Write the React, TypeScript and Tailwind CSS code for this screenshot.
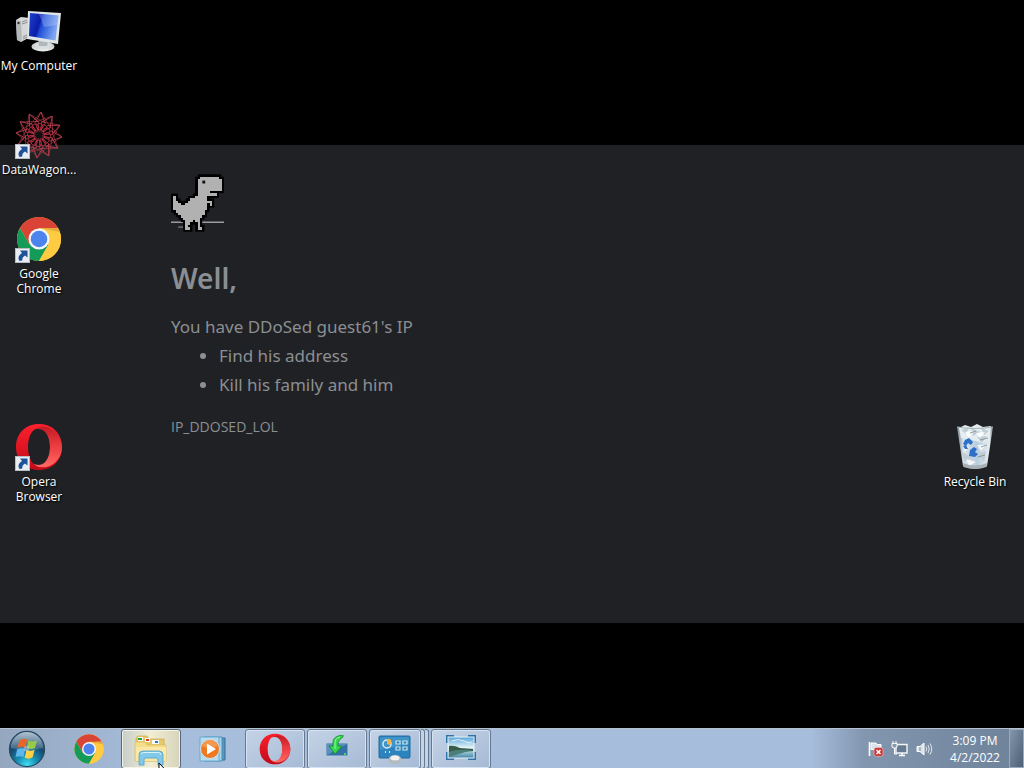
import type { ReactNode } from "react";

const DINO: [number, number, number][] = [
  [0, 11, 18], [1, 10, 19], [2, 10, 19], [3, 10, 19], [4, 10, 19], [5, 10, 19],
  [6, 10, 14], [7, 10, 17], [8, 0, 0], [8, 9, 13], [9, 0, 0], [9, 7, 13],
  [10, 0, 1], [10, 6, 15], [11, 0, 2], [11, 5, 13], [11, 15, 15], [12, 0, 13],
  [13, 0, 13], [14, 1, 12], [15, 2, 12], [16, 3, 11], [17, 4, 10], [18, 5, 7],
  [18, 9, 10], [19, 5, 6], [19, 10, 10], [20, 5, 5], [20, 10, 10], [21, 5, 6], [21, 10, 11],
];

function Dino() {
  return (
    <svg viewBox="-1 -1 22 24" className="h-[58px] w-[53px]" aria-hidden="true">
      <path d="M-1 19H21" stroke="#9a9b9d" strokeWidth=".6" />
      <path d="M2 21H4.500" stroke="#85868a" strokeWidth=".5" />
      <g fill="#000">
        {DINO.map(([y, a, b], i) => (
          <rect key={i} x={a - 0.9} y={y - 0.9} width={b - a + 2.8} height={2.8} />
        ))}
      </g>
      <g fill="#b1b1b2" shapeRendering="crispEdges">
        {DINO.map(([y, a, b], i) => (
          <rect key={i} x={a} y={y} width={b - a + 1} height={1.05} />
        ))}
      </g>
      <rect x="12" y="1.700" width="1.200" height="1.200" fill="#111" />
    </svg>
  );
}

function ComputerIcon() {
  return (
    <svg viewBox="0 0 48 48" className="size-12" aria-hidden="true">
      <defs>
        <linearGradient id="pcScreen" x1="0" y1="0" x2="1" y2=".3">
          <stop offset="0" stopColor="#1c43cc" />
          <stop offset=".42" stopColor="#0a1ca8" />
          <stop offset=".52" stopColor="#1f4fd8" />
          <stop offset="1" stopColor="#7fa6f0" />
        </linearGradient>
        <linearGradient id="pcBase" x1="0" y1="0" x2="0" y2="1">
          <stop offset="0" stopColor="#a8adb0" />
          <stop offset="1" stopColor="#f2f4f4" />
        </linearGradient>
      </defs>
      <path d="M1 13L6 10 15 11 17 29 6 35 2 33Z" fill="#d5d7d8" />
      <path d="M1 13L6 14 7 35 2 33Z" fill="#b4b8ba" />
      <path d="M7 15L12 13M7 17L13 15M8 30L16 26M8 32L16 28" stroke="#777" strokeWidth=".8" />
      <circle cx="3.500" cy="16" r="1.200" fill="#333" />
      <ellipse cx="28" cy="39.500" rx="11.500" ry="5" fill="url(#pcBase)" />
      <ellipse cx="28" cy="38" rx="9" ry="3.500" fill="#d9dddd" />
      <path d="M23 31H34L32 39H24Z" fill="#b1b8bc" />
      <path d="M13 4L46 6 43 37 12 32Z" fill="#dfe4e6" />
      <path d="M15 6L43.500 8.500 40.500 33.500 14 29Z" fill="url(#pcScreen)" />
      <path d="M24 7L43.500 8.500 42 18 29 20Z" fill="#cadcff" opacity=".3" />
    </svg>
  );
}

function WagonIcon() {
  return (
    <svg viewBox="0 0 48 48" className="size-12" fill="none" stroke="#c04050" aria-hidden="true">
      {Array.from({ length: 12 }, (_, i) => (
        <g key={i} transform={`rotate(${i * 30 + 5} 24 24)`}>
          <path d="M24 1L35 16 24 22 13 16Z" strokeWidth=".7" opacity=".75" />
          <path d="M24 1L29 12M24 1L19 12" strokeWidth=".8" />
          <circle cx="24" cy="15.500" r="3.200" strokeWidth=".9" stroke="#cd3049" opacity=".8" />
        </g>
      ))}
      <circle cx="24" cy="24" r="3.500" fill="#111" stroke="none" />
    </svg>
  );
}

function ChromeIcon({ className }: { className: string }) {
  return (
    <svg viewBox="0 0 48 48" className={className} aria-hidden="true">
      <circle cx="24" cy="24" r="22" fill="#ffcb43" />
      <path d="M24 24V13H43A22 22 0 0 0 4.950 13L14.500 29.500Z" fill="#da4437" />
      <path d="M24 24L14.470 29.500 4.950 13A22 22 0 0 0 24 46L33.530 29.500Z" fill="#159b58" />
      <path d="M24 24H34V13H43.050A22 22 0 0 1 24 46L33.530 29.500Z" fill="#ffcb43" />
      <path d="M24 13H43.050A22 22 0 0 1 44.700 17Z" fill="#a9622c" opacity=".3" />
      <circle cx="24" cy="24" r="10.500" fill="#f5f7f8" />
      <circle cx="24" cy="24" r="8.300" fill="#4c83ed" />
    </svg>
  );
}

function OperaIcon({ className, id }: { className: string; id: string }) {
  return (
    <svg viewBox="0 0 48 48" className={className} aria-hidden="true">
      <defs>
        <linearGradient id={`${id}a`} x1="0" y1="0" x2="0" y2="1">
          <stop offset="0" stopColor="#ff202d" />
          <stop offset="1" stopColor="#c00a18" />
        </linearGradient>
        <linearGradient id={`${id}b`} x1="0" y1="0" x2="0" y2="1">
          <stop offset="0" stopColor="#c51b25" />
          <stop offset=".5" stopColor="#ed3e42" />
          <stop offset="1" stopColor="#ff6a65" />
        </linearGradient>
      </defs>
      <path fillRule="evenodd" d="M24 1C10 1 1 11 1 24S10 47 24 47 47 37 47 24 38 1 24 1ZM24 5C31 5 35 14 35 24S31 43 24 43 13 34 13 24 17 5 24 5Z" fill={`url(#${id}a)`} />
      <path d="M18 7.500C28 -2 47 7 47 24S28 50 18 40.500C29 46 35 35 35 24S29 2 18 7.500Z" fill={`url(#${id}b)`} />
    </svg>
  );
}

function BinIcon() {
  return (
    <svg viewBox="0 0 48 48" className="size-12" aria-hidden="true">
      <defs>
        <linearGradient id="bin" x1="0" y1="0" x2="1" y2="0">
          <stop offset="0" stopColor="#758490" />
          <stop offset=".18" stopColor="#dbe6ee" />
          <stop offset=".55" stopColor="#b8cddd" />
          <stop offset=".9" stopColor="#e6edf0" />
          <stop offset="1" stopColor="#717b80" />
        </linearGradient>
      </defs>
      <path d="M6 4L42 4 36 43Q24 49 12 43Z" fill="url(#bin)" />
      <path d="M8 5L14 2 20 4 26 1 32 4 40 3 38 15 32 20 21 17 10 15Z" fill="#e5edf0" />
      <path d="M10 7L18 5 15 11ZM20 5L29 9 22 13ZM30 5L38 8 33 12ZM26 14L36 13 31 20ZM11 29L22 35 13 39ZM27 31L35 28 33 39Z" fill="#c1ced5" />
      <path d="M14 9L23 8 18 15ZM25 10L34 9 29 15ZM15 36L25 39 18 43ZM26 22L35 22 30 28ZM12 23L18 24 14 29Z" fill="#fff" opacity=".8" />
      <path d="M29 17L37 15M30 24L36 22M19 10L25 8M27 34L34 32" stroke="#7a868c" strokeWidth=".8" />
      <path d="M6 4Q24 7 42 4" fill="none" stroke="#aab6bc" strokeWidth="1.200" />
      <path d="M12 40Q24 45 36 40L35.500 44Q24 48 12.500 44Z" fill="#a8b0b4" />
      <path d="M14 17L18 15 22 19 20 22 17 20 15 23 12 21ZM18 33L19 27 23 24 26 26 24 29 27 31 24 34ZM12 23L15 22 17 26 14 26Z" fill="#2d70c8" />
    </svg>
  );
}

function ShortcutArrow() {
  return (
    <svg viewBox="0 0 15 15" className="absolute bottom-0 left-0 size-[15px]" aria-hidden="true">
      <rect width="15" height="15" fill="#e9edf1" />
      <rect x=".5" y=".5" width="14" height="14" fill="none" stroke="#b6bdc4" />
      <path d="M5 2.500L12.500 2.500V9.500L10 7.500Q7 9 7.200 12.500L4.500 13Q1.500 8.500 7 5Z" fill="#1d5299" />
    </svg>
  );
}

function DesktopIcon({ label, icon, shortcut = false, place = "" }: {
  label: string; icon: ReactNode; shortcut?: boolean; place?: string;
}) {
  return (
    <button type="button" className={`flex flex-col items-center gap-[3px] self-start ${place}`}>
      <span className="relative block">
        {icon}
        {shortcut && <ShortcutArrow />}
      </span>
      <span className="max-w-[78px] text-center text-xs leading-[15px] text-white [text-shadow:1px_1px_2px_#000]">
        {label}
      </span>
    </button>
  );
}

function StartOrb() {
  return (
    <svg viewBox="0 0 40 40" className="size-[38px]" aria-hidden="true">
      <defs>
        <radialGradient id="orb" cx=".5" cy=".95" r=".95">
          <stop offset="0" stopColor="#42e0f2" />
          <stop offset=".3" stopColor="#178fb4" />
          <stop offset=".62" stopColor="#164a70" />
          <stop offset="1" stopColor="#3f6585" />
        </radialGradient>
        <linearGradient id="orbShine" x1="0" y1="0" x2="0" y2="1">
          <stop offset="0" stopColor="#fff" stopOpacity=".6" />
          <stop offset="1" stopColor="#fff" stopOpacity=".12" />
        </linearGradient>
      </defs>
      <circle cx="20" cy="20" r="18.500" fill="url(#orb)" stroke="#284963" strokeWidth="1.200" />
      <path d="M3 19A17 17 0 0 1 37 19Q20 24 3 19Z" fill="url(#orbShine)" />
      <path d="M12 11Q16 8 20 10L18.500 18.500Q14.500 16.500 10 18.800Z" fill="#e96427" />
      <path d="M21.500 11Q25 13 30.500 11L28.500 19Q24 21 20 18.800Z" fill="#97ca49" />
      <path d="M9.500 20.500Q14 18 18 20.500L16.300 28.500Q12 26.500 8 28.500Z" fill="#5cb7ed" />
      <path d="M19.500 21Q24 23 28 20.800L26 28.500Q22 31.500 17.500 29Z" fill="#ffd044" />
      <circle cx="19.500" cy="19.500" r="3" fill="#fff" opacity=".3" />
    </svg>
  );
}

function FolderIcon() {
  return (
    <svg viewBox="0 0 36 34" className="h-[34px] w-9" aria-hidden="true">
      <path d="M3 6L5 4H14L16 7H31L32 29H3Z" fill="#e6c966" stroke="#c9a854" strokeWidth=".7" />
      <path d="M5 5H10V9H5ZM12 6H17V10H12ZM19 8H26V12H19Z" fill="#f8fbfa" />
      <path d="M5 6H9V8H5Z" fill="#23a42e" />
      <path d="M13 7H16V9H13Z" fill="#cd392d" />
      <path d="M22 9H25V11H22Z" fill="#3477c9" />
      <path d="M2 10H12L14 13H33V29H2Z" fill="#f5dd8b" stroke="#d9bc65" strokeWidth=".7" />
      <path d="M3 15H33V29H3Z" fill="#fae9a6" />
      <path d="M6 33V23Q6 19 10 19H26Q30 19 30 23V33H25V28Q25 26 23 26H13Q11 26 11 28V33Z" fill="#82c9e9" stroke="#4f9fc8" strokeWidth=".8" />
      <path d="M8 22Q9 20.500 11 20.500H25Q28 20.500 28 23" fill="none" stroke="#d6f2fb" />
    </svg>
  );
}

function MediaIcon() {
  return (
    <svg viewBox="0 0 30 28" className="h-7 w-[30px]" aria-hidden="true">
      <path d="M9 3H27V25H9Z" fill="#5796bd" stroke="#347099" />
      <path d="M6 2H24V26H6Z" fill="#a9d3ea" stroke="#4e8fb8" />
      <path d="M2 2H21V26H2Z" fill="#b6dcf0" stroke="#68a8cc" />
      <circle cx="12" cy="14" r="9.500" fill="#ed7923" stroke="#d9dfe3" />
      <path d="M4 11A8.500 8.500 0 0 1 20 11Q12 15 4 11Z" fill="#f9ad66" opacity=".6" />
      <path d="M9 8.500L18 14 9 19.500Z" fill="#fff" />
    </svg>
  );
}

function DownloadIcon() {
  return (
    <svg viewBox="0 0 28 28" className="size-7" aria-hidden="true">
      <path d="M3 8H25V21H3Z" fill="#3471a5" stroke="#b6cbe0" />
      <path d="M4 9H24L4 20Z" fill="#5b91bd" />
      <path d="M20 0Q10 1 10 7V11H6L12 19 19 11H15V8Q16 4 20 2Z" fill="#36d64d" stroke="#128d2c" strokeWidth=".8" />
      <path d="M17 2Q12 3 12 8V14" fill="none" stroke="#97f7a2" />
      <circle cx="22" cy="19" r="1" fill="#6bea62" />
    </svg>
  );
}

function ControlPanelIcon() {
  return (
    <svg viewBox="0 0 34 30" className="h-[30px] w-[34px]" aria-hidden="true">
      <rect x="1" y="2" width="31" height="22" rx="1" fill="#2c83bd" stroke="#226b9f" />
      <path d="M2 3H31V10L2 16Z" fill="#54a4d2" opacity=".5" />
      <circle cx="9" cy="10" r="4" fill="none" stroke="#d9edf5" strokeWidth="1.500" />
      <path d="M9 10V5L12 5Q15 8 12 11Z" fill="#f6b243" />
      <path d="M18 7H22V10H18ZM25 7H29V10H25ZM18 13H22V16H18ZM25 13H29V16H25Z" fill="#347ba8" stroke="#c4e7f3" strokeWidth="1.200" />
      <path d="M7 18H8M11 18H12" stroke="#d8eef9" strokeWidth="2" />
      <ellipse cx="17" cy="25.500" rx="6.500" ry="4.500" fill="#b4babd" />
      <ellipse cx="17" cy="24" rx="4.500" ry="2.500" fill="#f1f2f1" />
    </svg>
  );
}

function PhotoIcon() {
  return (
    <svg viewBox="0 0 34 30" className="h-[30px] w-[34px]" aria-hidden="true">
      <defs>
        <linearGradient id="sky" x1="0" y1="0" x2="0" y2="1">
          <stop offset="0" stopColor="#56a5dc" />
          <stop offset=".5" stopColor="#e2f2f5" />
          <stop offset=".65" stopColor="#aed4dc" />
          <stop offset="1" stopColor="#4384a7" />
        </linearGradient>
      </defs>
      <path d="M2 1H10V26H2ZM24 1H32V26H24Z" fill="#2e72a8" />
      <path d="M2 9H10V18H2ZM24 9H32V18H24Z" fill="#b4c6dd" />
      <rect x="4" y="3" width="26" height="21" fill="url(#sky)" stroke="#e8f1f6" />
      <path d="M5 12Q10 11 16 14L29 15V17L5 19Z" fill="#395c48" />
      <path d="M5 18Q12 15 28 16L15 20 5 23Z" fill="#4b7f78" />
      <path d="M8 7Q14 4 20 7T28 8" fill="none" stroke="#fff" opacity=".7" />
    </svg>
  );
}

function TaskButton({ label, children, active = false, open = true, stacked = false }: {
  label: string; children: ReactNode; active?: boolean; open?: boolean; stacked?: boolean;
}) {
  const skin = active
    ? "border-[#59677c] bg-linear-to-r from-[#c6cdca] via-[#f3eed1] to-[#d5d4bc] shadow-[inset_0_0_0_1px_#f4f3e6]"
    : open
      ? "border-[#66798f] bg-linear-to-br from-[#c4d3e6] to-[#a6bad5] shadow-[inset_0_0_0_1px_#d5e2f1]"
      : "border-transparent";
  return (
    <div className="flex h-10 w-[60px]">
      <button type="button" aria-label={label} className={`flex flex-1 items-center justify-center rounded-[3px] border ${skin}`}>
        {children}
      </button>
      {stacked && (
        <>
          <span className="w-1 rounded-r-[3px] border border-l-0 border-[#66798f] bg-[#c4d3e6]" />
          <span className="w-1 rounded-r-[3px] border border-l-0 border-[#66798f] bg-[#c4d3e6]" />
        </>
      )}
    </div>
  );
}

function FlagIcon() {
  return (
    <svg viewBox="0 0 18 18" className="size-[18px]" aria-hidden="true">
      <path d="M2.500 2V16" stroke="#fff" strokeWidth="1.600" />
      <path d="M4 3H9L10 4.500H14V11H9L8 9.500H4Z" fill="#dce2e9" stroke="#fff" />
      <rect x="7" y="7.500" width="9" height="9" rx="2.500" fill="#c93a3a" stroke="#f1c1c1" strokeWidth=".6" />
      <path d="M9.500 10L13.500 14M13.500 10L9.500 14" stroke="#fff" strokeWidth="1.500" />
    </svg>
  );
}

function NetworkIcon() {
  return (
    <svg viewBox="0 0 18 18" className="size-[18px]" aria-hidden="true">
      <path d="M5 4.500H16V13H5Z" fill="#657b91" stroke="#f2f5f8" strokeWidth="1.400" />
      <path d="M8 15.500H14M11 13V15" stroke="#fff" strokeWidth="1.500" />
      <path d="M2 1V4M5 1V4" stroke="#fff" />
      <path d="M1 3.500H6V7Q5 8 3.500 8T1 7Z" fill="#8799ad" stroke="#fff" />
      <path d="M3.500 8V14H6" fill="none" stroke="#fff" />
    </svg>
  );
}

function SpeakerIcon() {
  return (
    <svg viewBox="0 0 18 18" className="size-[18px]" fill="none" aria-hidden="true">
      <path d="M2 6.500H5L9 3V15L5 11.500H2Z" fill="#dbe1e8" stroke="#fff" />
      <path d="M5 7V11" stroke="#7d8da0" />
      <path d="M11 6.500Q12.500 9 11 11.500M13 5Q15.500 9 13 13M15 3.500Q18.500 9 15 14.500" stroke="#eaf0f6" strokeWidth=".9" />
    </svg>
  );
}

export default function App() {
  return (
    <div className="relative flex min-h-screen flex-col overflow-hidden bg-black font-['Open_Sans','Noto_Sans',sans-serif]">
      <div className="absolute inset-0 flex items-center">
        <section className="aspect-[1024/478] w-full bg-[#202124] px-[171px] pt-[29px] font-['Noto_Sans','Open_Sans',sans-serif] text-[#8b8f93]">
          <Dino />
          <h1 className="mt-[26px] text-[28px] leading-10 font-semibold">Well,</h1>
          <p className="mt-3.5 text-[17px] leading-[29px]">You have DDoSed guest61&apos;s IP</p>
          <ul className="list-disc pl-12 text-[17px] leading-[29px]">
            <li>Find his address</li>
            <li>Kill his family and him</li>
          </ul>
          <p className="mt-[18px] font-['Open_Sans','Noto_Sans',sans-serif] text-sm leading-5">IP_DDOSED_LOL</p>
        </section>
      </div>

      <main className="relative grid flex-1 auto-rows-[104px] grid-cols-[78px_1fr_98px] content-start pt-[7px]">
        <DesktopIcon label="My Computer" icon={<ComputerIcon />} place="col-start-1 row-start-1" />
        <DesktopIcon label="DataWagon..." icon={<WagonIcon />} shortcut place="col-start-1 row-start-2" />
        <DesktopIcon label="Google Chrome" icon={<ChromeIcon className="size-12" />} shortcut place="col-start-1 row-start-3" />
        <DesktopIcon label="Opera Browser" icon={<OperaIcon className="size-12" id="desk" />} shortcut place="col-start-1 row-start-5" />
        <DesktopIcon label="Recycle Bin" icon={<BinIcon />} place="col-start-3 row-start-5" />
      </main>

      <footer className="relative flex h-10 items-stretch justify-between border-t border-[#b5c1cf] bg-linear-to-r from-[#94a7bf] from-0% via-[#a7bddc] via-15% to-[#a7bddc] to-75%">
        <nav aria-label="Taskbar" className="flex items-center gap-0.5 pl-2">
          <button type="button" aria-label="Start" className="mr-[11px] flex w-[38px] items-center justify-center">
            <StartOrb />
          </button>
          <TaskButton label="Google Chrome" open={false}><ChromeIcon className="size-8" /></TaskButton>
          <TaskButton label="File Explorer" active><FolderIcon /></TaskButton>
          <TaskButton label="Media Player" open={false}><MediaIcon /></TaskButton>
          <TaskButton label="Opera"><OperaIcon className="size-8" id="task" /></TaskButton>
          <TaskButton label="Installer"><DownloadIcon /></TaskButton>
          <TaskButton label="Control Panel" stacked><ControlPanelIcon /></TaskButton>
          <TaskButton label="Photo Viewer"><PhotoIcon /></TaskButton>
        </nav>
        <div className="flex items-stretch bg-linear-to-r from-[#a7bddc] from-0% via-[#8296af] via-25% to-[#6d8299] pl-14 text-white">
          <div className="flex items-center gap-1.5 pr-2">
            <FlagIcon />
            <NetworkIcon />
            <SpeakerIcon />
          </div>
          <div className="flex w-[68px] flex-col justify-center pt-px text-center text-xs leading-[17px]">
            <span>3:09 PM</span>
            <span>4/2/2022</span>
          </div>
          <button type="button" aria-label="Show desktop" className="w-[15px] border border-[#9aabbd] bg-linear-to-br from-[#8496a9] to-[#4c6076]" />
        </div>
      </footer>
      <svg viewBox="0 0 12 19" className="absolute bottom-[-13px] left-[158px] h-[19px] w-3" aria-hidden="true">
        <path d="M1 1V15L4.500 12 7 18 9.500 17 7 11.500H11Z" fill="#fff" stroke="#000" />
      </svg>
    </div>
  );
}
